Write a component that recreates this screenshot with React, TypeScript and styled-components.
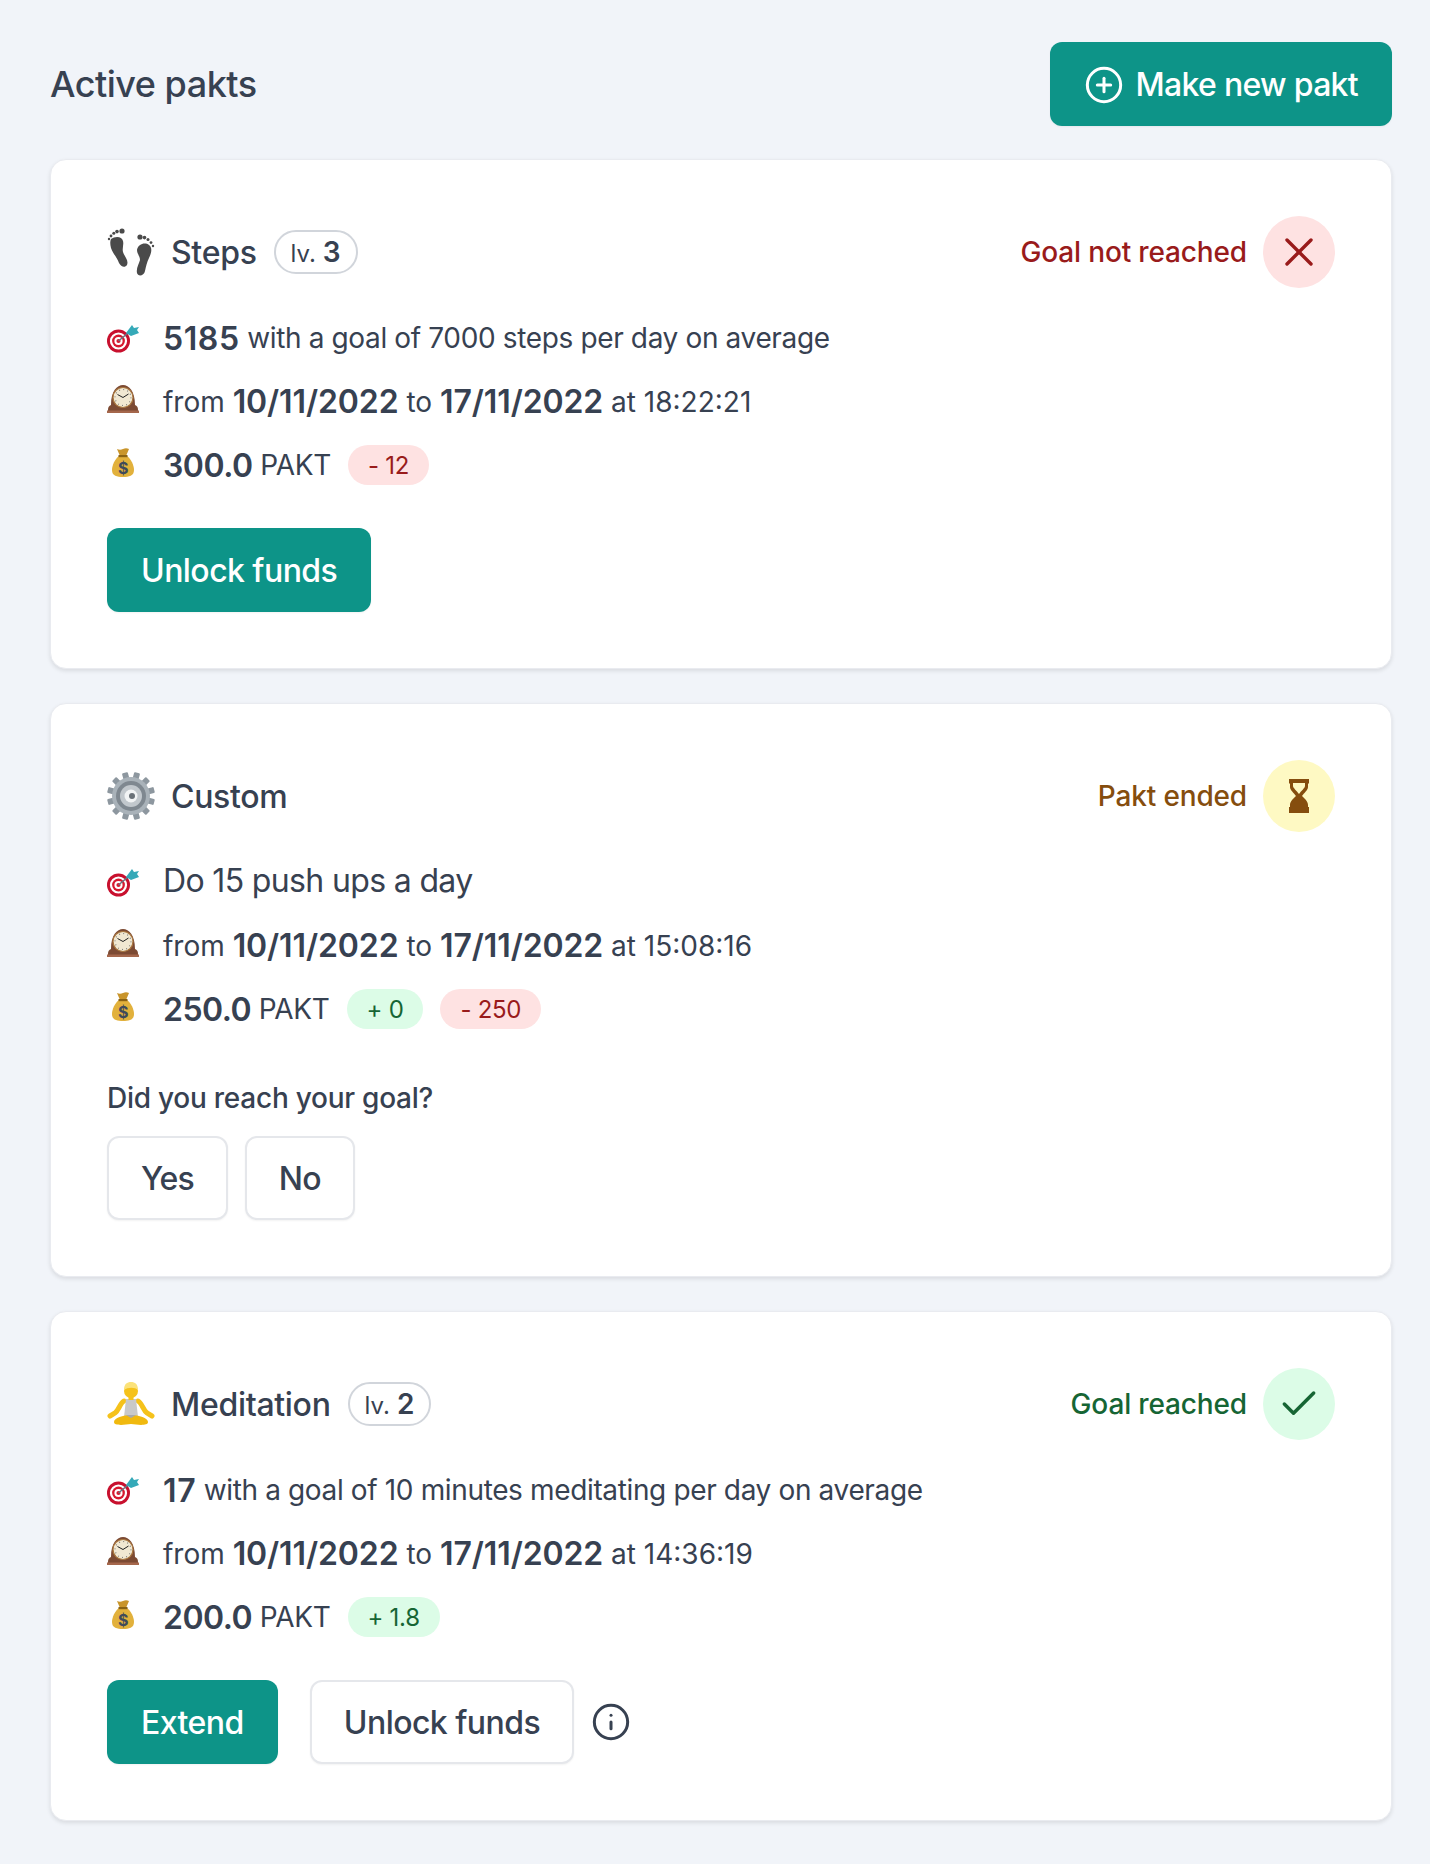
import React from 'react';
import styled, { createGlobalStyle } from 'styled-components';
import { Check, CirclePlus, Info, X } from 'lucide-react';

type Tone = 'red' | 'yellow' | 'green';

const tones: Record<Tone, { fg: string; bg: string }> = {
  red: { fg: '#991b1b', bg: '#fee2e2' },
  yellow: { fg: '#854d0e', bg: '#fef9c3' },
  green: { fg: '#166534', bg: '#dcfce7' },
};

const GlobalStyle = createGlobalStyle`
  html, body {
    margin: 0;
    padding: 0;
    background: #f1f4f9;
  }
  body {
    font-family: Inter, "Liberation Sans", sans-serif;
    color: #374151;
  }
`;

const Page = styled.main`
  box-sizing: border-box;
  width: 1430px;
  min-height: 1864px;
  padding: 42px 38px 42px 50px;
  display: flex;
  flex-direction: column;
  gap: 34px;
`;

const Button = styled.button<{ $primary?: boolean }>`
  box-sizing: border-box;
  display: inline-flex;
  align-items: center;
  gap: 12px;
  height: 84px;
  padding: 1px ${(p) => (p.$primary ? '34px' : '32px')} 0;
  font-family: inherit;
  font-size: 32px;
  font-weight: 500;
  line-height: 48px;
  letter-spacing: -0.55px;
  border-radius: 12px;
  color: ${(p) => (p.$primary ? '#ffffff' : '#374151')};
  background: ${(p) => (p.$primary ? '#0d9488' : '#ffffff')};
  border: ${(p) => (p.$primary ? '0' : '2px solid #e5e7eb')};
  box-shadow: 0 1px 2px rgba(0, 0, 0, 0.05);
`;

const Header = styled.header`
  display: flex;
  align-items: center;
  justify-content: space-between;
  margin-bottom: -1px;

  ${Button} {
    letter-spacing: -0.7px;
  }
`;

const Heading = styled.h2`
  margin: 0;
  font-size: 36px;
  line-height: 48px;
  font-weight: 500;
  letter-spacing: -0.5px;
  color: #374151;
`;

const Card = styled.section`
  box-sizing: border-box;
  padding: 56px;
  background: #ffffff;
  border: 1px solid #e9ebf0;
  border-radius: 16px;
  box-shadow: 0 2px 4px rgba(0, 0, 0, 0.1);
`;

const TitleRow = styled.div`
  display: flex;
  align-items: center;
  justify-content: space-between;
  height: 72px;
  margin-bottom: 26px;
`;

const TitleLeft = styled.div`
  display: flex;
  align-items: center;
`;

const TitleIcon = styled.span`
  display: flex;
  width: 48px;
  height: 48px;
  margin-right: 16px;
`;

const Title = styled.h3`
  margin: 2px 0 0;
  font-size: 32px;
  line-height: 48px;
  font-weight: 500;
  letter-spacing: -0.3px;
`;

const Level = styled.span`
  box-sizing: border-box;
  display: inline-flex;
  align-items: baseline;
  gap: 7px;
  height: 44px;
  margin-left: 17px;
  padding: 0 15px;
  font-size: 24px;
  line-height: 40px;
  border: 2px solid #d1d5db;
  border-radius: 22px;

  b {
    font-size: 28px;
    font-weight: 600;
  }
`;

const Status = styled.div<{ $tone: Tone }>`
  display: flex;
  align-items: center;
  gap: 16px;
  font-size: 28px;
  font-weight: 500;
  letter-spacing: -0.15px;
  color: ${(p) => tones[p.$tone].fg};
`;

const StatusIcon = styled.span<{ $tone: Tone }>`
  display: flex;
  align-items: center;
  justify-content: center;
  width: 72px;
  height: 72px;
  border-radius: 50%;
  background: ${(p) => tones[p.$tone].bg};
`;

const Rows = styled.div`
  display: flex;
  flex-direction: column;
  gap: 15.5px;
`;

const Row = styled.div`
  display: flex;
  align-items: center;
  height: 48px;
  font-size: 28px;
  white-space: pre;

  strong {
    font-size: 32px;
    font-weight: 600;
    letter-spacing: -0.1px;
  }
`;

const GoalRow = styled(Row)`
  letter-spacing: -0.36px;

  strong {
    letter-spacing: 0.6px;
  }
`;

const AmountRow = styled(Row)`
  letter-spacing: -0.3px;

  strong {
    letter-spacing: -0.5px;
  }
`;

const RowIcon = styled.span`
  display: flex;
  flex: none;
  width: 56px;
  height: 34px;
`;

const Large = styled.span`
  padding-bottom: 4px;
  font-size: 32px;
  letter-spacing: -0.65px;
`;

const Pill = styled.span<{ $tone: Tone }>`
  display: inline-flex;
  align-items: center;
  height: 40px;
  margin-left: 17px;
  padding: 0 20px;
  border-radius: 20px;
  font-size: 24px;
  letter-spacing: -0.3px;
  color: ${(p) => tones[p.$tone].fg};
  background: ${(p) => tones[p.$tone].bg};
`;

const Actions = styled.div`
  display: flex;
  align-items: center;
  margin-top: 39px;
  gap: 32px;
`;

const Question = styled.p`
  margin: 45px 0 0;
  font-size: 28px;
  line-height: 40px;
  font-weight: 500;
  letter-spacing: -0.25px;
`;

const Choices = styled.div`
  display: flex;
  gap: 17px;
  margin-top: 18px;

  ${Button} {
    letter-spacing: -0.9px;
  }
`;

const InfoMark = styled.span`
  display: flex;
  margin-left: -15px;
`;

const Footprints = () => (
  <svg viewBox="0 0 48 48" width="48" height="48" fill="#4a4a4a">
    <path d="M4 11C8 8 15 8 16 13C17 17 15 20 16 24C17 28 22 32 20 37C18 40 14 39 12 35C10 29 6 26 4 20C3 16 3 13 4 11z" />
    <circle cx="15" cy="3" r="2.6" />
    <circle cx="10" cy="3.6" r="1.8" />
    <circle cx="6.8" cy="5.2" r="1.5" />
    <circle cx="4" cy="8" r="1.4" />
    <circle cx="2" cy="11" r="1.2" />
    <path d="M30 22C31 16 38 14 42 17C46 20 44 26 42 30C40 34 39 38 38 43C37 48 31 49 30 45C29 40 32 36 33 32C33 28 30 26 30 22z" />
    <circle cx="33" cy="9" r="2.6" />
    <circle cx="37.5" cy="9.6" r="1.8" />
    <circle cx="41" cy="11.4" r="1.5" />
    <circle cx="44" cy="14.6" r="1.4" />
    <circle cx="46" cy="18" r="1.2" />
  </svg>
);

const Gear = () => (
  <svg viewBox="0 0 48 48" width="48" height="48">
    <g fill="#8d979f">
      {[0, 30, 60, 90, 120, 150, 180, 210, 240, 270, 300, 330].map((a) => (
        <rect key={a} x="21" y="0" width="6" height="10" rx="1" transform={`rotate(${a + 15} 24 24)`} />
      ))}
    </g>
    <circle cx="24" cy="24" r="19" fill="#a9b2b9" />
    <circle cx="24" cy="24" r="15" fill="#7f8890" />
    <circle cx="24" cy="24" r="11" fill="#c2c8cd" />
    <circle cx="24" cy="24" r="6.5" fill="#f2f4f5" />
    <circle cx="25" cy="24" r="3" fill="#6a7178" />
  </svg>
);

const Meditator = () => (
  <svg viewBox="0 0 48 48" width="48" height="48">
    <path d="M17 21C13 23 12 30 8 33L3 36" fill="none" stroke="#f5c21b" strokeWidth="5" strokeLinecap="round" />
    <path d="M31 21C35 23 36 30 40 33L45 36" fill="none" stroke="#f5c21b" strokeWidth="5" strokeLinecap="round" />
    <path d="M19 19h10l2 18H17z" fill="#c9c9c9" />
    <path d="M7 42c0-4 9-7 17-7s17 3 17 7c0 4-10 3-17 2-7 1-17 2-17-2z" fill="#f0b90f" />
    <path d="M19 35h10l-5 3z" fill="#a9a9a9" />
    <circle cx="24" cy="11" r="7" fill="#f5c21b" />
    <rect x="21.5" y="15" width="5" height="5" fill="#f5c21b" />
    <path d="M17 10c0-6 3-8 7-8s7 2 7 8c-3-3-10-3-14 0z" fill="#fbe27a" />
  </svg>
);

const Target = () => (
  <svg viewBox="0 0 34 34" width="34" height="34">
    <circle cx="11.5" cy="20" r="11.5" fill="#c8102e" />
    <circle cx="11.5" cy="20" r="8.6" fill="#ffffff" />
    <circle cx="11.5" cy="20" r="6.4" fill="#d7192f" />
    <circle cx="11.5" cy="20" r="4.1" fill="#ffffff" />
    <circle cx="11.5" cy="20" r="2.1" fill="#d7192f" />
    <path d="M11.5 20l13-11" stroke="#6b7280" strokeWidth="1.5" />
    <path d="M19 12l6-8 2 3 5-1-2 3 2 3-8 3z" fill="#35a9b8" />
  </svg>
);

const Clock = () => (
  <svg viewBox="0 0 34 34" width="34" height="34">
    <path d="M1 28v-3c0-3 1-4 3-5C4 6 10 0 16 0s12 6 12 20c2 1 3 2 3 5v3z" fill="#7c4a33" />
    <rect x="0" y="25.5" width="32" height="2.5" fill="#a5674c" />
    <circle cx="16" cy="12.5" r="10" fill="#f1e8d2" stroke="#a8763e" strokeWidth="1.2" />
    <circle cx="16" cy="12.5" r="8" fill="none" stroke="#6b6b6b" strokeWidth="1.2" strokeDasharray="0.8 3.4" />
    <path d="M16 12.5L10.5 9.5M16 12.5L21.5 9" stroke="#222" strokeWidth="1" />
  </svg>
);

const MoneyBag = () => (
  <svg viewBox="0 0 34 34" width="34" height="34">
    <path d="M10 1c2 1 4 1 6 0s4-1 6 0l-3 7h-6z" fill="#c9952b" />
    <path d="M12 8h8c4 3 7 9 7 14 0 6-5 7-11 7S5 28 5 22c0-5 3-11 7-14z" fill="#e2b13c" />
    <rect x="11.5" y="7" width="9" height="2.2" fill="#8a6314" />
    <text x="16" y="26" textAnchor="middle" fontSize="16" fontWeight="700" fill="#3f4a5a" fontFamily="Inter, sans-serif">$</text>
  </svg>
);

const Hourglass = () => (
  <svg viewBox="0 0 20 34" width="20" height="34" fill="#854d0e">
    <path
      fillRule="evenodd"
      d="M0 0h20v4l-1 1v3c0 3-4 6-6 9 2 2 6 5 6 9v2l1 0v6H0v-6l1 0v-2c0-4 4-7 6-9-2-3-6-6-6-9V5L0 4zM4 4v3c0 2 4 5 6 8 2-3 6-6 6-8V4z"
    />
  </svg>
);

const App = () => (
  <>
    <GlobalStyle />
    <Page>
      <Header>
        <Heading>Active pakts</Heading>
        <Button $primary>
          <CirclePlus size={40} strokeWidth={1.8} />
          Make new pakt
        </Button>
      </Header>

      <Card>
        <TitleRow>
          <TitleLeft>
            <TitleIcon><Footprints /></TitleIcon>
            <Title>Steps</Title>
            <Level>lv. <b>3</b></Level>
          </TitleLeft>
          <Status $tone="red">
            Goal not reached
            <StatusIcon $tone="red"><X size={48} strokeWidth={1.7} /></StatusIcon>
          </Status>
        </TitleRow>
        <Rows>
          <GoalRow>
            <RowIcon><Target /></RowIcon>
            <strong>5185</strong> with a goal of 7000 steps per day on average
          </GoalRow>
          <Row>
            <RowIcon><Clock /></RowIcon>
            from <strong>10/11/2022</strong> to <strong>17/11/2022</strong> at 18:22:21
          </Row>
          <AmountRow>
            <RowIcon><MoneyBag /></RowIcon>
            <strong>300.0</strong> PAKT
            <Pill $tone="red">- 12</Pill>
          </AmountRow>
        </Rows>
        <Actions>
          <Button $primary>Unlock funds</Button>
        </Actions>
      </Card>

      <Card>
        <TitleRow>
          <TitleLeft>
            <TitleIcon><Gear /></TitleIcon>
            <Title>Custom</Title>
          </TitleLeft>
          <Status $tone="yellow">
            Pakt ended
            <StatusIcon $tone="yellow"><Hourglass /></StatusIcon>
          </Status>
        </TitleRow>
        <Rows>
          <GoalRow>
            <RowIcon><Target /></RowIcon>
            <Large>Do 15 push ups a day</Large>
          </GoalRow>
          <Row>
            <RowIcon><Clock /></RowIcon>
            from <strong>10/11/2022</strong> to <strong>17/11/2022</strong> at 15:08:16
          </Row>
          <AmountRow>
            <RowIcon><MoneyBag /></RowIcon>
            <strong>250.0</strong> PAKT
            <Pill $tone="green">+ 0</Pill>
            <Pill $tone="red">- 250</Pill>
          </AmountRow>
        </Rows>
        <Question>Did you reach your goal?</Question>
        <Choices>
          <Button>Yes</Button>
          <Button>No</Button>
        </Choices>
      </Card>

      <Card>
        <TitleRow>
          <TitleLeft>
            <TitleIcon><Meditator /></TitleIcon>
            <Title>Meditation</Title>
            <Level>lv. <b>2</b></Level>
          </TitleLeft>
          <Status $tone="green">
            Goal reached
            <StatusIcon $tone="green"><Check size={44} strokeWidth={1.9} /></StatusIcon>
          </Status>
        </TitleRow>
        <Rows>
          <GoalRow>
            <RowIcon><Target /></RowIcon>
            <strong>17</strong> with a goal of 10 minutes meditating per day on average
          </GoalRow>
          <Row>
            <RowIcon><Clock /></RowIcon>
            from <strong>10/11/2022</strong> to <strong>17/11/2022</strong> at 14:36:19
          </Row>
          <AmountRow>
            <RowIcon><MoneyBag /></RowIcon>
            <strong>200.0</strong> PAKT
            <Pill $tone="green">+ 1.8</Pill>
          </AmountRow>
        </Rows>
        <Actions>
          <Button $primary>Extend</Button>
          <Button>Unlock funds</Button>
          <InfoMark><Info size={40} strokeWidth={1.8} /></InfoMark>
        </Actions>
      </Card>
    </Page>
  </>
);

export default App;
